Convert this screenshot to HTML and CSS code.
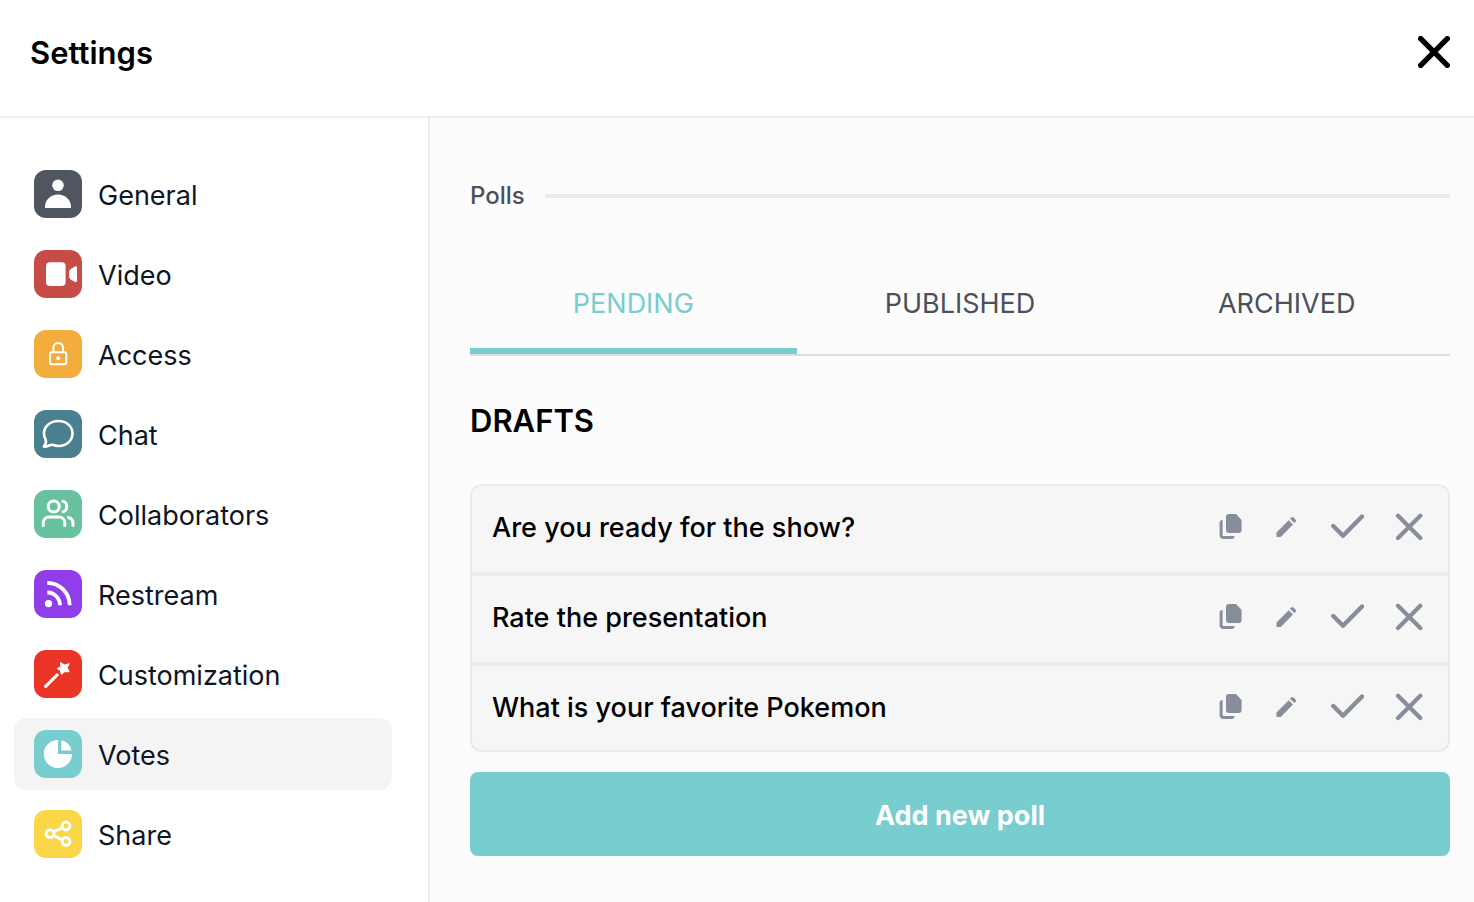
FILE: index.html
```html
<!DOCTYPE html>
<html lang="en">

<head>
    <meta charset="UTF-8">
    <meta name="viewport" content="width=device-width, initial-scale=1.0">
    <title>Settings</title>
    <link rel="stylesheet" href="styles.css">
</head>

<body>
    <!-- shared row icons -->
    <svg class="sprite" aria-hidden="true">
        <symbol id="icon-copy" viewBox="0 0 28 30">
            <path d="M11 1h7l5.600 6v10a3 3 0 0 1-3 3H11a3 3 0 0 1-3-3V4a3 3 0 0 1 3-3z" />
            <path d="M1.600 10a3 3 0 0 1 3-3v15a1 1 0 0 0 1 1h11a3 3 0 0 1-3 3H5.600a4 4 0 0 1-4-4z" />
        </symbol>
        <symbol id="icon-edit" viewBox="0 0 24 30">
            <path d="M.5 19.4L12.7 7.2l4.3 4.3L4.7 24H1a.5.5 0 0 1-.5-.5z" />
            <path d="M14 5.8l1.4-1.3q1-.8 2 0l2.3 2.3q.8 1 0 2L18.3 10z" />
        </symbol>
        <symbol id="icon-check" viewBox="0 0 34 30">
            <path d="M3.3 13L13 22.8 32 3.5" fill="none" stroke="currentColor" stroke-width="4.4" stroke-linecap="round" stroke-linejoin="round" />
        </symbol>
        <symbol id="icon-cross" viewBox="0 0 30 30">
            <path d="M4 2.8L26.3 25M26.3 2.8L4 25" fill="none" stroke="currentColor" stroke-width="4.2" stroke-linecap="round" />
        </symbol>
    </svg>

    <div class="settings">
        <header class="header">
            <h1>Settings</h1>
            <button class="close" aria-label="Close">
                <svg width="32" height="32" viewBox="0 0 32 32" fill="none" stroke="currentColor" stroke-width="5.4" stroke-linecap="round">
                    <path d="M2.7 2.7l26.6 26.6M29.3 2.7L2.7 29.3" />
                </svg>
            </button>
        </header>

        <div class="body">
            <nav class="sidebar">
                <a href="#general" class="nav-item">
                    <svg class="tile general" viewBox="0 0 48 48" fill="#fff">
                        <circle cx="24" cy="15.3" r="5.8" />
                        <path d="M11 38v-1.4c0-7 6-12.2 13-12.2s13 5.2 13 12.2V38z" />
                    </svg>
                    <span>General</span>
                </a>
                <a href="#video" class="nav-item">
                    <svg class="tile video" viewBox="0 0 48 48" fill="#fff">
                        <rect x="12" y="12.3" width="19.6" height="23.7" rx="4" />
                        <path d="M41 16.4q2-.9 2 1.4v12.8q0 2.300-2 1.400l-4-2.300q-2-1.200-2-3.200v-4.600q0-2 2-3.200z" />
                    </svg>
                    <span>Video</span>
                </a>
                <a href="#access" class="nav-item">
                    <svg class="tile access" viewBox="0 0 48 48" fill="none" stroke="#fff" stroke-width="2">
                        <rect x="16" y="22.3" width="16.3" height="11.9" rx="2" />
                        <path d="M19.4 22v-4.3a4.8 4.8 0 0 1 9.6 0V22" />
                        <circle cx="24.2" cy="28.3" r="2" fill="#fff" stroke="none" />
                    </svg>
                    <span>Access</span>
                </a>
                <a href="#chat" class="nav-item">
                    <svg class="tile chat" viewBox="0 0 48 48" fill="none" stroke="#fff" stroke-width="2.6" stroke-linejoin="round">
                        <path d="M9.8 36.5c1.600-1.800 2.600-4.200 2-6.500C10.600 28 10 26 10 23.500 10 16.300 16.500 11 24.500 11S38.500 16.500 38.500 23.500 32.500 36 24.500 36c-2 0-4-.4-6-1.200-1.500-.5-2.500.6-4.500 1.200-1.500.5-3 .7-4.200.5z" />
                    </svg>
                    <span>Chat</span>
                </a>
                <a href="#collaborators" class="nav-item">
                    <svg class="tile collaborators" viewBox="0 0 48 48" fill="none" stroke="#fff" stroke-width="3" stroke-linecap="round">
                        <circle cx="19.7" cy="16.5" r="5.5" />
                        <path d="M29 11.2a5.6 5.6 0 0 1 0 10.6M9.2 35.6v-2.5c0-3.7 2.4-6 6-6h9.6c3.6 0 6 2.3 6 6v2.5M34.5 27.5c2.8.8 4.5 3 4.500 5.900v2.200" />
                    </svg>
                    <span>Collaborators</span>
                </a>
                <a href="#restream" class="nav-item">
                    <svg class="tile restream" viewBox="0 0 48 48" fill="none" stroke="#fff" stroke-width="3.8">
                        <circle cx="14.5" cy="33.6" r="3.7" fill="#fff" stroke="none" />
                        <path d="M13.3 12.8A22.4 22.4 0 0 1 35.7 35.2M13.3 22.5A12.7 12.7 0 0 1 26 35.2" />
                    </svg>
                    <span>Restream</span>
                </a>
                <a href="#customization" class="nav-item">
                    <svg class="tile customization" viewBox="0 0 48 48" fill="#fff" stroke="#fff" stroke-linejoin="round" stroke-linecap="round">
                        <path d="M11.7 36.3l11.4-11.4" stroke-width="3.2" />
                        <path d="M26.800 12.700l3.700 2.300 4.700-1.300-2 4.100 2 4-4.300-.2-3.400 2.800-1.300-4.100-3-1.800 3.400-1.600z" />
                    </svg>
                    <span>Customization</span>
                </a>
                <a href="#votes" class="nav-item active">
                    <svg class="tile votes" viewBox="0 0 48 48" fill="#fff">
                        <path d="M24 9.9v14.1h14A14.1 14.1 0 1 1 24 9.9z" />
                        <path d="M27.3 10.2v10.2h10.2A13.6 13.6 0 0 0 27.3 10.2z" />
                    </svg>
                    <span>Votes</span>
                </a>
                <a href="#share" class="nav-item">
                    <svg class="tile share" viewBox="0 0 48 48" fill="none" stroke="#fff" stroke-width="3">
                        <circle cx="16" cy="23.7" r="3.9" />
                        <circle cx="32" cy="16" r="3.9" />
                        <circle cx="32" cy="31.5" r="3.9" />
                        <path d="M19.5 22l9-4.300M19.500 25.400l9 4.400" />
                    </svg>
                    <span>Share</span>
                </a>
            </nav>

            <main class="content">
                <div class="section-title">
                    <h2>Polls</h2>
                    <hr>
                </div>

                <div class="tabs" role="tablist">
                    <button class="tab active" role="tab" aria-selected="true">PENDING</button>
                    <button class="tab" role="tab" aria-selected="false">PUBLISHED</button>
                    <button class="tab" role="tab" aria-selected="false">ARCHIVED</button>
                </div>

                <h3>DRAFTS</h3>

                <ul class="polls">
                    <li>
                        <span class="question">Are you ready for the show?</span>
                        <div class="actions">
                            <button aria-label="Duplicate"><svg width="28" height="30"><use href="#icon-copy" /></svg></button>
                            <button aria-label="Edit"><svg width="24" height="30"><use href="#icon-edit" /></svg></button>
                            <button aria-label="Publish"><svg width="34" height="30"><use href="#icon-check" /></svg></button>
                            <button aria-label="Delete"><svg width="30" height="30"><use href="#icon-cross" /></svg></button>
                        </div>
                    </li>
                    <li>
                        <span class="question">Rate the presentation</span>
                        <div class="actions">
                            <button aria-label="Duplicate"><svg width="28" height="30"><use href="#icon-copy" /></svg></button>
                            <button aria-label="Edit"><svg width="24" height="30"><use href="#icon-edit" /></svg></button>
                            <button aria-label="Publish"><svg width="34" height="30"><use href="#icon-check" /></svg></button>
                            <button aria-label="Delete"><svg width="30" height="30"><use href="#icon-cross" /></svg></button>
                        </div>
                    </li>
                    <li>
                        <span class="question">What is your favorite Pokemon</span>
                        <div class="actions">
                            <button aria-label="Duplicate"><svg width="28" height="30"><use href="#icon-copy" /></svg></button>
                            <button aria-label="Edit"><svg width="24" height="30"><use href="#icon-edit" /></svg></button>
                            <button aria-label="Publish"><svg width="34" height="30"><use href="#icon-check" /></svg></button>
                            <button aria-label="Delete"><svg width="30" height="30"><use href="#icon-cross" /></svg></button>
                        </div>
                    </li>
                </ul>

                <button class="add-poll">Add new poll</button>
            </main>
        </div>
    </div>
</body>

</html>
```

FILE: styles.css
```css
* {
    box-sizing: border-box;
}

body {
    margin: 0;
    font-family: Inter, "Liberation Sans", sans-serif;
    font-size: 27px;
    line-height: 40px;
    color: #000;
    background: #fff;
}

h1,
h2,
h3,
ul {
    margin: 0;
    padding: 0;
}

button {
    padding: 0;
    border: none;
    background: none;
    font: inherit;
    color: inherit;
    cursor: pointer;
}

svg {
    display: block;
}

.sprite {
    display: none;
}

.settings {
    display: flex;
    flex-direction: column;
    min-height: 100vh;
}

/* header */
.header {
    display: flex;
    justify-content: space-between;
    align-items: center;
    padding: 31px 24px 43px 30px;
    border-bottom: 2px solid #eeeeef;
}

.header h1 {
    padding-top: 2px;
    font-size: 31px;
    font-weight: 600;
}

.body {
    display: flex;
    flex: 1;
}

/* sidebar */
.sidebar {
    display: flex;
    flex-direction: column;
    gap: 8px;
    flex: 0 0 430px;
    padding: 40px 36px 32px 14px;
    border-right: 2px solid #eeeeef;
}

.nav-item {
    display: flex;
    align-items: center;
    gap: 16px;
    padding: 12px 20px;
    border-radius: 12px;
    color: #0d1626;
    text-decoration: none;
}

.nav-item span {
    padding-top: 4px;
}

.nav-item.active,
.nav-item:hover {
    background: #f4f4f4;
}

.tile {
    flex: none;
    width: 48px;
    height: 48px;
    border-radius: 12px;
}

.general { background: #50565f; }
.video { background: #c74c46; }
.access { background: #f3ad3d; }
.chat { background: #4a808f; }
.collaborators { background: #68c19f; }
.restream { background: #903dea; }
.customization { background: #ea3526; }
.votes { background: #78cdcf; }
.share { background: #f9d748; }

/* content */
.content {
    flex: 1;
    min-width: 0;
    padding: 58px 24px 40px 40px;
    background: #fcfcfc;
}

.section-title {
    display: flex;
    align-items: center;
    gap: 20px;
    color: #4b5059;
}

.section-title h2 {
    font-size: 24px;
    font-weight: 500;
}

.section-title hr {
    flex: 1;
    height: 4px;
    margin: 0;
    border: none;
    background: #ebebec;
}

.tabs {
    display: flex;
    margin-top: 38px;
    border-bottom: 2px solid #dddddf;
}

.tab {
    flex: 1;
    padding: 30px 0 24px;
    border-bottom: 6px solid transparent;
    color: #4b5059;
}

.tab.active {
    border-color: #78cdcf;
    color: #78cdcf;
}

.content h3 {
    margin: 45px 0 43px;
    font-size: 31px;
    font-weight: 600;
}

.polls {
    display: flex;
    flex-direction: column;
    gap: 2px;
    border: 2px solid #ebebeb;
    border-radius: 12px;
    background: #f6f6f6;
    list-style: none;
}

.polls li {
    display: flex;
    justify-content: space-between;
    align-items: center;
    padding: 22px 24px 22px 20px;
    font-weight: 500;
}

.polls li + li {
    border-top: 4px solid #ebebeb;
}

.actions {
    display: flex;
    gap: 30px;
    color: #878d9a;
    fill: #878d9a;
}

.add-poll {
    display: block;
    width: 100%;
    margin-top: 20px;
    padding: 24px 0 20px;
    border-radius: 8px;
    background: #78cdcf;
    color: #fff;
    font-weight: 700;
}
```
